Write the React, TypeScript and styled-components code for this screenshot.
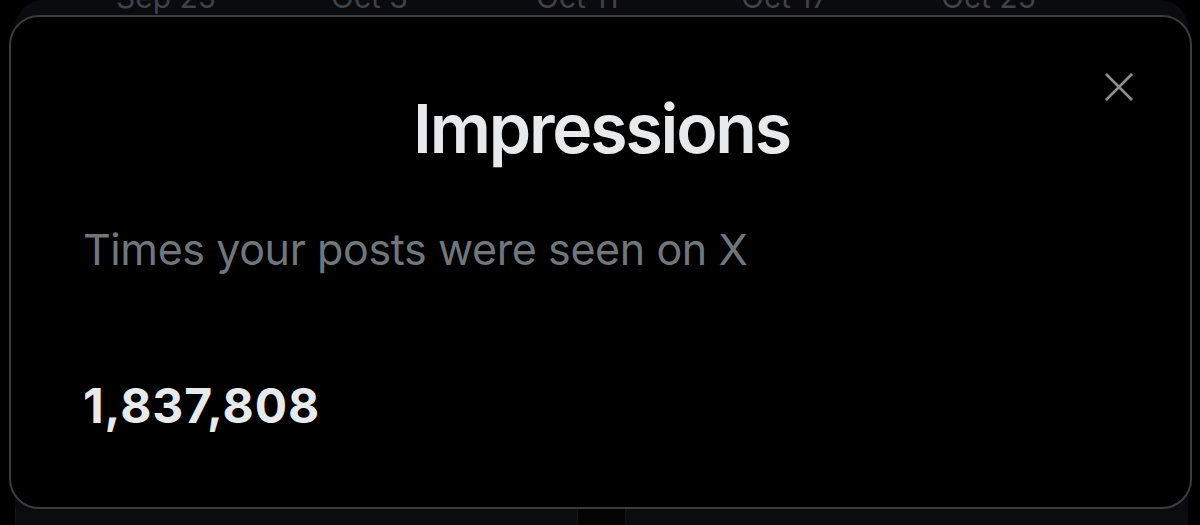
import React from 'react';
import styled, {createGlobalStyle} from 'styled-components';

const GlobalStyle = createGlobalStyle`
	html, body {
		margin: 0;
		padding: 0;
		background: #000;
	}
	body {
		font-family: Inter, 'Noto Sans', sans-serif;
		-webkit-font-smoothing: antialiased;
	}
`;

const Page = styled.div`
	position: relative;
	width: 1200px;
	height: 525px;
	overflow: hidden;
	background: #000;
`;

const Backdrop = styled.div`
	display: flex;
	flex-direction: column;
	height: 100%;
	margin: 0 12px 0 15px;
	background: #0a0b0e;
	border-radius: 28px 28px 0 0;
`;

const DateAxis = styled.div`
	display: flex;
	height: 14px;
	overflow: hidden;
	align-items: flex-end;
	padding-left: 101px;
`;

const DateLabel = styled.span<{$w: number}>`
	width: ${(p) => p.$w}px;
	font-size: 30px;
	line-height: 30px;
	margin-bottom: 2px;
	color: #3f4246;
	flex-shrink: 0;
`;

const Tiles = styled.div`
	margin-top: auto;
	display: grid;
	grid-template-columns: 562px 48px 1fr;
	height: 16px;
`;

const Tile = styled.div<{$gap?: boolean}>`
	background: ${(p) => (p.$gap ? '#040405' : '#0b0c0f')};
	border-left: 1px solid #141518;
`;

const Modal = styled.div`
	position: absolute;
	left: 9px;
	top: 15px;
	width: 1183px;
	height: 494px;
	box-sizing: border-box;
	background: #000;
	border: 2px solid #3b3c40;
	border-radius: 30px;
	padding: 76px 70px 0 72px;
	display: flex;
	flex-direction: column;
`;

const Title = styled.h1`
	margin: 0;
	text-align: center;
	font-size: 68px;
	line-height: 70px;
	font-weight: 600;
	color: #e7e9ea;
	letter-spacing: -2.2px;
`;

const Subtitle = styled.p`
	margin: 64px 0 0 0;
	font-size: 43px;
	line-height: 44px;
	font-weight: 400;
	color: #71767b;
	letter-spacing: -0.4px;
`;

const Count = styled.div`
	margin-top: 111px;
	font-size: 48px;
	line-height: 48px;
	font-weight: 700;
	color: #e7e9ea;
	letter-spacing: 0.9px;
`;

const CloseButton = styled.button`
	position: absolute;
	top: 52px;
	right: 53px;
	width: 36px;
	height: 36px;
	padding: 0;
	border: none;
	background: transparent;
	display: flex;
	align-items: center;
	justify-content: center;
	cursor: pointer;
`;

const dates = [
	{label: 'Sep 25', w: 215},
	{label: 'Oct 3', w: 205},
	{label: 'Oct 11', w: 205},
	{label: 'Oct 17', w: 200},
	{label: 'Oct 25', w: 200},
];

const App: React.FC = () => {
	return (
		<Page>
			<GlobalStyle />
			<Backdrop>
				<DateAxis>
					{dates.map((d) => (
						<DateLabel key={d.label} $w={d.w}>
							{d.label}
						</DateLabel>
					))}
				</DateAxis>
				<Tiles>
					<Tile />
					<Tile $gap />
					<Tile />
				</Tiles>
			</Backdrop>

			<Modal>
				<CloseButton aria-label='Close'>
					<svg width='30' height='30' viewBox='0 0 30 30'>
						<path
							d='M2 2 L28 28 M28 2 L2 28'
							stroke='#8e8e8e'
							strokeWidth='2.6'
							fill='none'
						/>
					</svg>
				</CloseButton>
				<Title>Impressions</Title>
				<Subtitle>Times your posts were seen on X</Subtitle>
				<Count>1,837,808</Count>
			</Modal>
		</Page>
	);
};

export default App;
